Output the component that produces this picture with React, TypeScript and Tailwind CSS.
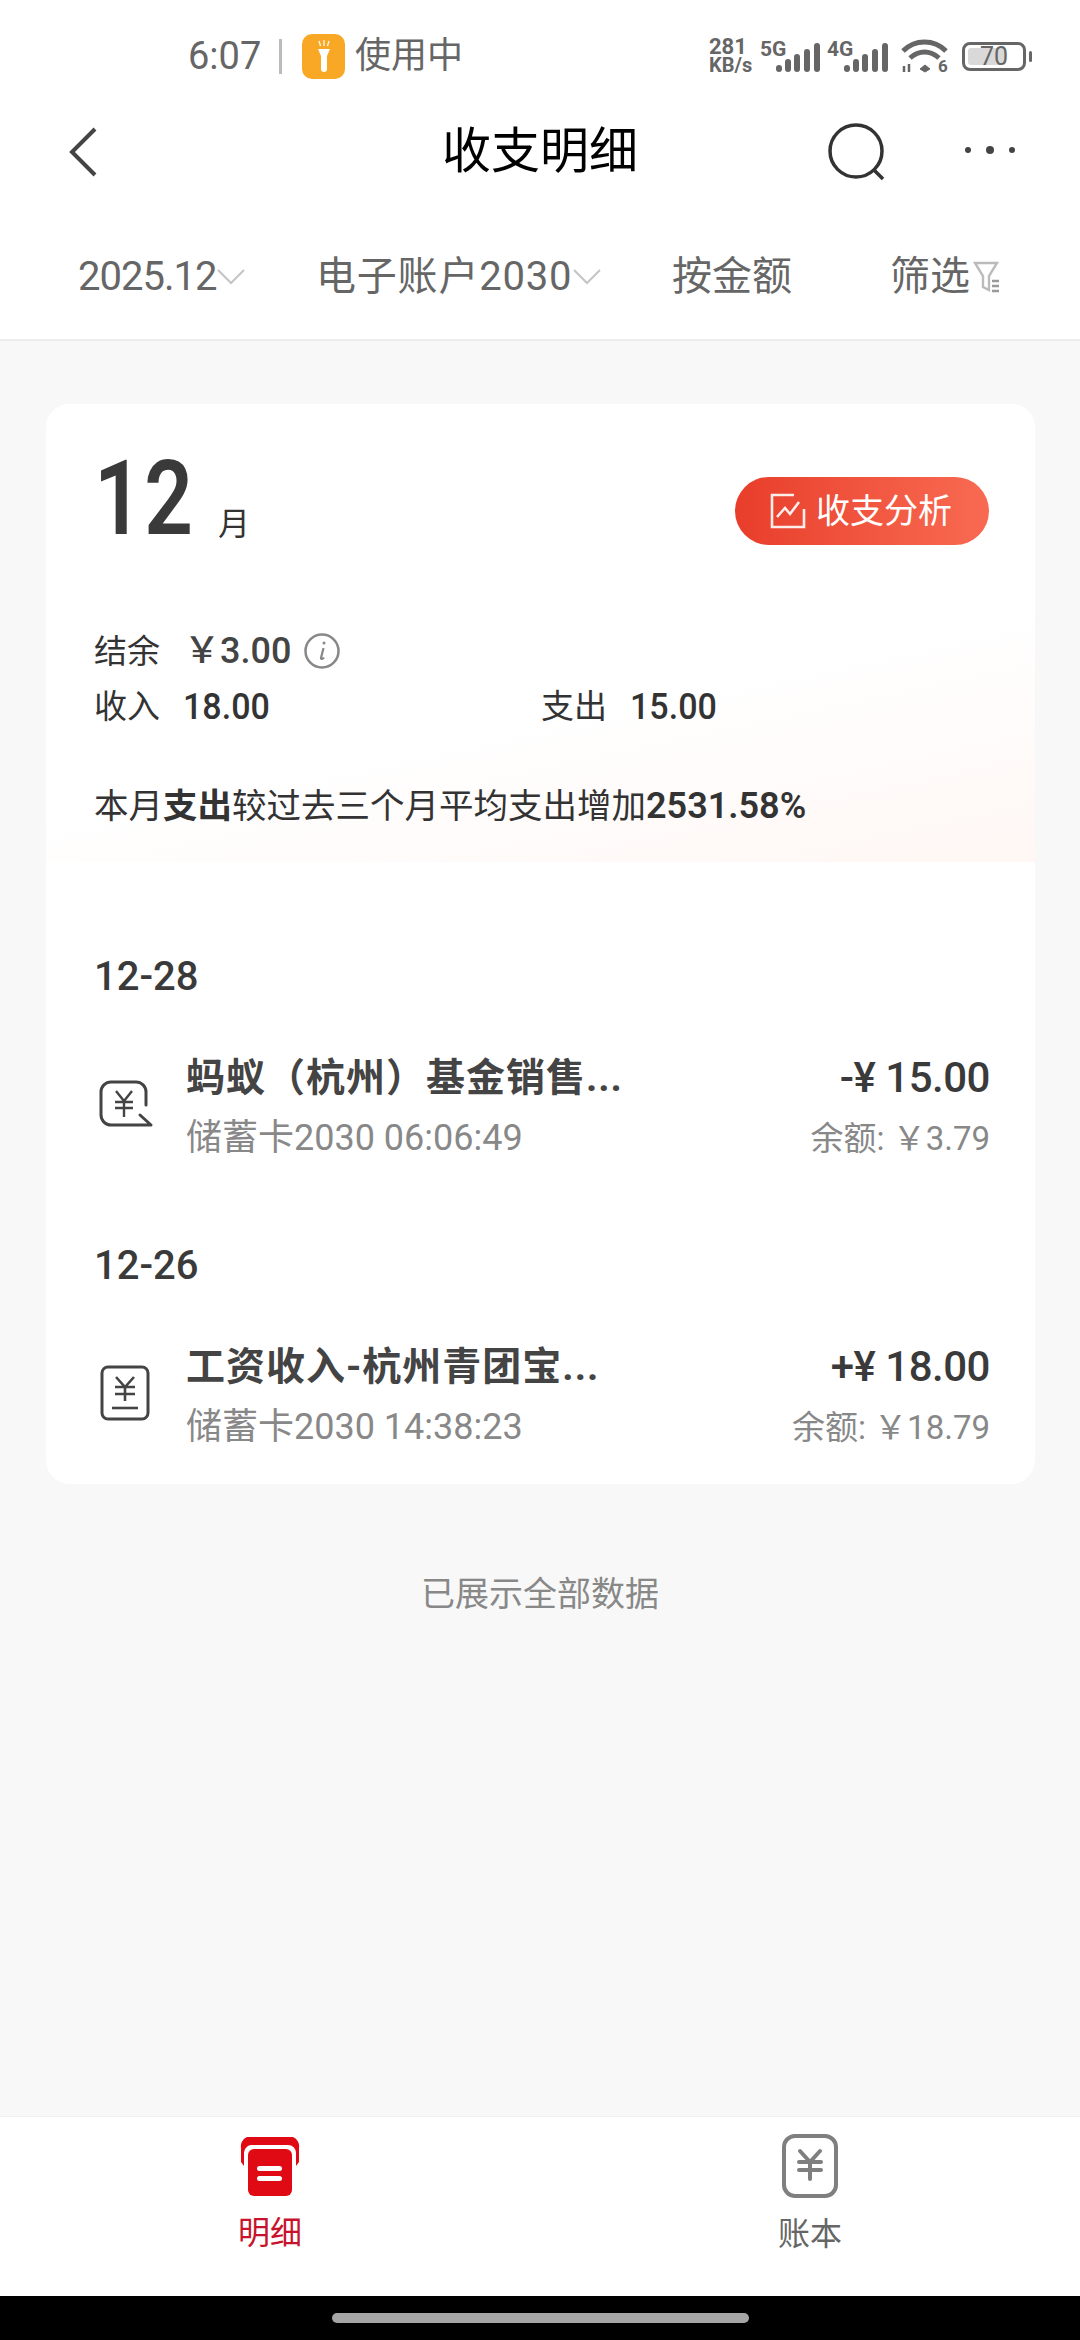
import React from "react";

const font = { fontFamily: '"Roboto","Noto Sans CJK SC",sans-serif' };

function Bars() {
  return (
    <svg width="45" height="30" viewBox="0 0 45 30" fill="#666">
      <rect x="0" y="22" width="6" height="7" rx="3" />
      <rect x="9" y="16" width="6" height="13" rx="3" />
      <rect x="18" y="11" width="6" height="18" rx="3" />
      <rect x="28" y="6" width="6" height="23" rx="3" />
      <rect x="38" y="0" width="6" height="29" rx="3" />
    </svg>
  );
}

function Chevron() {
  return (
    <svg width="30" height="18" viewBox="0 0 30 18" fill="none" stroke="#c4c4c4" strokeWidth="2">
      <path d="M2 2l13 13L28 2" />
    </svg>
  );
}

function StatusBar() {
  return (
    <div className="h-[90px] pt-[22px] flex items-center text-[#666] relative">
      <div className="ml-[188px] flex items-center">
        <span className="text-[38px] leading-none w-[76px]">6:07</span>
        <span className="w-[3px] h-[35px] bg-[#bbb] ml-[15px]" />
        <span className="ml-[20px] w-[43px] h-[45px] rounded-[10px] bg-[#f9a825] flex items-center justify-center">
          <svg width="22" height="38" viewBox="0 0 22 38" fill="#fff">
            <path d="M5 12h12l-3 7v13a3 3 0 0 1-6 0V19z" />
            <path d="M11 3v6M6 4l1.500 5M16 4l-1.500 5" stroke="#fff" strokeWidth="1.200" fill="none" />
          </svg>
        </span>
        <span className="ml-[10px] text-[36px] leading-none">使用中</span>
      </div>
      <div className="ml-auto mr-[54px] flex items-center">
        <div className="w-[51px] flex flex-col text-[22px] leading-[19px] font-bold">
          <span>281</span>
          <span className="text-[20px]">KB/s</span>
        </div>
        <span className="mb-[14px] text-[21px] leading-none font-bold w-[16px] whitespace-nowrap">5G</span>
        <div className="mt-[4px]"><Bars /></div>
        <span className="ml-[6px] mb-[14px] text-[21px] leading-none font-bold w-[17px] whitespace-nowrap">4G</span>
        <div className="mt-[4px]"><Bars /></div>
        <svg className="ml-[12px] mt-[6px]" width="48" height="40" viewBox="0 0 48 40" fill="none" stroke="#666" strokeWidth="5">
          <path d="M2 12C14 0 33 0 45 12" />
          <path d="M9 19c9-8 20-8 29 0" />
          <path d="M24 26l5 4-5 3-5-3z" fill="#666" strokeWidth="1" />
          <path d="M3 27v6M8 25v8" strokeWidth="2.500" />
          <text x="37" y="33" fontSize="17" fontWeight="700" fill="#666" stroke="none">6</text>
        </svg>
        <div className="ml-[13px] relative w-[64px] h-[29px] rounded-[8px] border-[3px] border-[#666] flex items-center justify-center">
          <span className="absolute left-[3px] top-[3px] bottom-[3px] w-[38px] bg-[#d9d9d9] rounded-[3px]" />
          <span className="relative text-[25px] leading-none">70</span>
          <span className="absolute -right-[9px] top-[6px] w-[3px] h-[11px] bg-[#666] rounded-full" />
        </div>
      </div>
    </div>
  );
}

function Nav() {
  return (
    <div className="h-[125px] relative flex items-center justify-center">
      <span className="text-[49px] leading-none text-black -mt-[2px]">收支明细</span>
      <svg className="absolute left-[68px] top-[37px]" width="30" height="50" viewBox="0 0 30 50" fill="none" stroke="#444" strokeWidth="4">
        <path d="M27 2L4 25l23 23" />
      </svg>
      <svg className="absolute left-[826px] top-[33px]" width="62" height="60" viewBox="0 0 62 60" fill="none" stroke="#333" strokeWidth="3.500">
        <circle cx="30" cy="28" r="26" />
        <path d="M47 46l10 10" />
      </svg>
      <svg className="absolute left-[962px] top-[50px]" width="56" height="20" viewBox="0 0 56 20" fill="#444">
        <circle cx="6" cy="10" r="3" />
        <circle cx="28" cy="10" r="4" />
        <circle cx="50" cy="10" r="3" />
      </svg>
    </div>
  );
}

function Tabs() {
  return (
    <div className="h-[126px] border-b-2 border-[#ececec] flex items-center text-[40px] leading-none text-[#666]">
      <div className="ml-[78px] flex items-center w-[238px]">
        <span className="tracking-[-1px]">2025.12</span>
        <Chevron />
      </div>
      <div className="flex items-center w-[356px]">
        <span className="tracking-[0.8px]">电子账户2030</span>
        <Chevron />
      </div>
      <span className="w-[218px]">按金额</span>
      <div className="flex items-center">
        <span>筛选</span>
        <svg className="ml-[3px]" width="28" height="36" viewBox="0 0 28 36" fill="none" stroke="#bbb" strokeWidth="2.400">
          <path d="M2 4h22l-8 13v14l-6-3V17z" />
          <path d="M19 22h7M19 27h7M19 32h7" stroke="#999" />
        </svg>
      </div>
    </div>
  );
}

function Summary() {
  return (
    <div className="h-[458px] rounded-t-[24px] bg-[linear-gradient(168deg,#ffffff_62%,#fff7f4_100%)] pl-[48px] pr-[46px] text-[#333]">
      <div className="flex items-start h-[219px]">
        <span className="mt-[43px] text-[104px] leading-[104px] font-semibold tracking-[2px] text-[#3a3a3a] [transform:scaleX(0.82)] origin-left w-[118px]">12</span>
        <span className="mt-[104px] ml-[6px] text-[32px] leading-none">月</span>
        <div className="ml-auto mt-[73px] w-[254px] h-[68px] rounded-full bg-gradient-to-r from-[#e83d2a] to-[#f96a52] flex items-center pl-[35px] text-white">
          <svg width="36" height="36" viewBox="0 0 36 36" fill="none" stroke="#fff" strokeWidth="2.600" className="opacity-90">
            <path d="M24 2H2v32h32V16" />
            <path d="M7 24l8-9 5 6 9-12" />
          </svg>
          <span className="ml-[10px] text-[34px] leading-none">收支分析</span>
        </div>
      </div>
      <div className="flex items-center h-[56px] text-[33px] leading-none">
        <span>结余</span>
        <span className="ml-[24px] font-medium text-[36px] text-[#444]">￥3.00</span>
        <svg className="ml-[12px]" width="38" height="38" viewBox="0 0 38 38" fill="none" stroke="#888" strokeWidth="2.500">
          <circle cx="19" cy="19" r="16.500" />
          <path d="M20.500 16l-2.500 10c0 1.500 2 1 3-.5" strokeWidth="2.200" />
          <circle cx="21" cy="11" r="1.500" fill="#888" stroke="none" />
        </svg>
      </div>
      <div className="flex items-center h-[54px] text-[33px] leading-none">
        <div className="w-[447px] flex items-center">
          <span>收入</span>
          <span className="ml-[23px] font-medium text-[37px] [transform:scaleX(0.92)] origin-left">18.00</span>
        </div>
        <span>支出</span>
        <span className="ml-[23px] font-medium text-[37px] [transform:scaleX(0.92)] origin-left">15.00</span>
      </div>
      <div className="mt-[45px] h-[56px] flex items-center text-[34.500px] leading-none">
        <span>本月<b className="font-bold">支出</b>较过去三个月平均支出增加<b className="font-semibold text-[36px]">2531.58%</b></span>
      </div>
    </div>
  );
}

function LedgerIcon({ kind }: { kind: "out" | "in" }) {
  if (kind === "out") {
    return (
      <svg width="54" height="50" viewBox="0 0 54 50" fill="none" stroke="#444" strokeWidth="3" className="mt-[30px]">
        <path d="M47 25V12A10 10 0 0 0 37 2H12A10 10 0 0 0 2 12v23a10 10 0 0 0 10 10h40L41 35" strokeLinecap="round" strokeLinejoin="round" />
        <path d="M17 11l8 10 8-10M16 22h18M16 28h18M25 21v16" strokeWidth="2.400" />
      </svg>
    );
  }
  return (
    <svg width="52" height="56" viewBox="0 0 52 56" fill="none" stroke="#444" strokeWidth="3" className="mt-[26px]">
      <rect x="3" y="2" width="46" height="52" rx="6" />
      <path d="M17 12l9 10 9-10M16 22h20M16 29h20M26 22v14" strokeWidth="2.600" />
      <path d="M13 43h26" strokeWidth="2.600" />
    </svg>
  );
}

function Entry({ date, kind, title, sub, amount, balance }: { date: string; kind: "out" | "in"; title: string; sub: string; amount: string; balance: string }) {
  return (
    <div className="h-[289px] pl-[48px] pr-[45px] text-[#333]">
      <div className="h-[56px] flex items-center text-[40px] leading-none font-medium text-[#3a3a3a]">{date}</div>
      <div className="mt-[45px] flex">
        <div className="w-[92px] pl-[5px]">
          <LedgerIcon kind={kind} />
        </div>
        <div className="flex flex-col">
          <span className="h-[56px] flex items-center text-[39px] leading-none font-bold text-[#444] tracking-[1px]">{title}</span>
          <span className="h-[64px] flex items-center text-[36px] leading-none text-[#888]">{sub}</span>
        </div>
        <div className="ml-auto flex flex-col items-end">
          <span className="h-[56px] flex items-center text-[42px] leading-none font-medium text-[#3a3a3a] tracking-[-0.5px]">{amount}</span>
          <span className="h-[64px] flex items-center text-[33px] leading-none text-[#888]">{balance}</span>
        </div>
      </div>
    </div>
  );
}

export default function App() {
  return (
    <div style={font} className="w-[1080px] h-[2340px] flex flex-col bg-[#f8f8f8] overflow-hidden">
      <div className="bg-white">
        <StatusBar />
        <Nav />
        <Tabs />
      </div>
      <div className="flex-1 flex flex-col">
        <div className="mt-[63px] ml-[46px] mr-[45px] h-[1080px] rounded-[24px] bg-white">
          <Summary />
          <div className="h-[87px]" />
          <Entry date="12-28" kind="out" title="蚂蚁（杭州）基金销售..." sub="储蓄卡2030 06:06:49" amount="-¥ 15.00" balance="余额: ￥3.79" />
          <Entry date="12-26" kind="in" title="工资收入-杭州青团宝..." sub="储蓄卡2030 14:38:23" amount="+¥ 18.00" balance="余额: ￥18.79" />
        </div>
        <div className="mt-[93px] text-center text-[34px] leading-none text-[#888]">已展示全部数据</div>
      </div>
      <div className="h-[180px] bg-white flex border-t border-[#f0f0f0]">
        <div className="w-[540px] flex flex-col items-center">
          <svg className="mt-[19px]" width="60" height="60" viewBox="0 0 60 60">
            <path d="M1 12a10 10 0 0 1 6-11h46a10 10 0 0 1 6 11v14l-3 4V17a8 8 0 0 0-8-8H11a8 8 0 0 0-7 8v13l-3-4z" fill="#e00a14" />
            <rect x="8" y="13" width="44" height="47" rx="6" fill="#e00a14" />
            <rect x="17" y="30" width="25" height="5" rx="2.500" fill="#fff" />
            <rect x="17" y="40" width="25" height="5" rx="2.500" fill="#fff" />
          </svg>
          <span className="mt-[21px] text-[32px] leading-none text-[#c8132c]">明细</span>
        </div>
        <div className="w-[540px] flex flex-col items-center">
          <svg className="mt-[17px]" width="58" height="64" viewBox="0 0 58 64" fill="none" stroke="#7f7f7f" strokeWidth="4">
            <rect x="3" y="2" width="52" height="60" rx="11" />
            <path d="M19 17l10 11 10-11M18 28h22M18 36h22M29 28v17" strokeLinecap="round" />
          </svg>
          <span className="mt-[20px] text-[32px] leading-none text-[#666]">账本</span>
        </div>
      </div>
      <div className="h-[44px] bg-black flex items-center justify-center">
        <span className="w-[417px] h-[10px] rounded-full bg-[#a5a5a5]" />
      </div>
    </div>
  );
}
